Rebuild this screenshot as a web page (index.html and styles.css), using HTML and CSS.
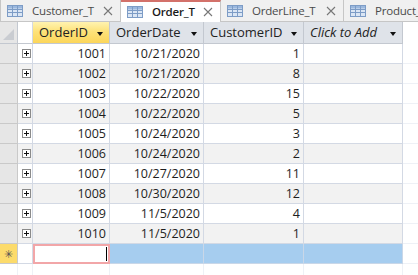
FILE: index.html
```html
<!DOCTYPE html>
<html lang="en">
<head>
    <meta charset="UTF-8">
    <title>Order_T</title>
    <link rel="stylesheet" href="styles.css">
</head>
<body>
    <!-- Document tabs -->
    <div class="tabs">
        <div class="tab tab-customer">
            <svg class="tbl-icon" width="16" height="12" viewBox="0 0 16 12"><rect x="0.5" y="0.5" width="15" height="11" fill="#dbe6f4" stroke="#7d9cc6"/><rect x="1" y="1" width="14" height="2.5" fill="#9bb8de"/><path d="M1 4.5h14M1 7.5h14M5.5 1v10M10.5 1v10" stroke="#7d9cc6" stroke-width="1"/></svg>
            <span class="tab-name">Customer_T</span>
            <svg class="close" width="10" height="10" viewBox="0 0 10 10"><path d="M1 1l8 8M9 1l-8 8" stroke="#777" stroke-width="1.1"/></svg>
        </div>
        <div class="tab tab-order active">
            <svg class="tbl-icon" width="16" height="12" viewBox="0 0 16 12"><rect x="0.5" y="0.5" width="15" height="11" fill="#dbe6f4" stroke="#7d9cc6"/><rect x="1" y="1" width="14" height="2.5" fill="#9bb8de"/><path d="M1 4.5h14M1 7.5h14M5.5 1v10M10.5 1v10" stroke="#7d9cc6" stroke-width="1"/></svg>
            <span class="tab-name">Order_T</span>
            <svg class="close" width="10" height="10" viewBox="0 0 10 10"><path d="M1 1l8 8M9 1l-8 8" stroke="#777" stroke-width="1.1"/></svg>
        </div>
        <div class="tab tab-orderline">
            <svg class="tbl-icon" width="16" height="12" viewBox="0 0 16 12"><rect x="0.5" y="0.5" width="15" height="11" fill="#dbe6f4" stroke="#7d9cc6"/><rect x="1" y="1" width="14" height="2.5" fill="#9bb8de"/><path d="M1 4.5h14M1 7.5h14M5.5 1v10M10.5 1v10" stroke="#7d9cc6" stroke-width="1"/></svg>
            <span class="tab-name">OrderLine_T</span>
            <svg class="close" width="10" height="10" viewBox="0 0 10 10"><path d="M1 1l8 8M9 1l-8 8" stroke="#777" stroke-width="1.1"/></svg>
        </div>
        <div class="tab tab-product">
            <svg class="tbl-icon" width="16" height="12" viewBox="0 0 16 12"><rect x="0.5" y="0.5" width="15" height="11" fill="#dbe6f4" stroke="#7d9cc6"/><rect x="1" y="1" width="14" height="2.5" fill="#9bb8de"/><path d="M1 4.5h14M1 7.5h14M5.5 1v10M10.5 1v10" stroke="#7d9cc6" stroke-width="1"/></svg>
            <span class="tab-name">Product_T</span>
        </div>
    </div>

    <!-- Datasheet -->
    <div class="sheet">
        <div class="row head">
            <div class="cell sel corner"><span class="corner-mark"></span></div>
            <div class="cell exp"></div>
            <div class="cell hcell picked">OrderID<span class="arrow"></span></div>
            <div class="cell hcell">OrderDate<span class="arrow"></span></div>
            <div class="cell hcell">CustomerID<span class="arrow"></span></div>
            <div class="cell hcell add">Click to Add<span class="arrow"></span></div>
            <div class="cell fill"></div>
        </div>
        <div id="rows"></div>
        <div class="row newrow">
            <div class="cell sel star">&#10035;</div>
            <div class="cell exp"></div>
            <div class="cell editing"><span class="caret"></span></div>
            <div class="cell blue"></div>
            <div class="cell blue"></div>
            <div class="cell blue"></div>
            <div class="cell fill"></div>
        </div>
        <div class="row empty">
            <div class="cell"></div>
            <div class="cell"></div>
            <div class="cell"></div>
            <div class="cell"></div>
            <div class="cell"></div>
            <div class="cell"></div>
            <div class="cell fill"></div>
        </div>
    </div>

    <script>
        // Order rows
        var orders = [
            [1001, "10/21/2020", 1],
            [1002, "10/21/2020", 8],
            [1003, "10/22/2020", 15],
            [1004, "10/22/2020", 5],
            [1005, "10/24/2020", 3],
            [1006, "10/24/2020", 2],
            [1007, "10/27/2020", 11],
            [1008, "10/30/2020", 12],
            [1009, "11/5/2020", 4],
            [1010, "11/5/2020", 1]
        ];

        var html = "";
        orders.forEach(function(o, i) {
            html += '<div class="row data' + (i % 2 ? ' alt' : '') + '">' +
                '<div class="cell sel"></div>' +
                '<div class="cell exp"><span class="plus"></span></div>' +
                '<div class="cell num">' + o[0] + '</div>' +
                '<div class="cell num">' + o[1] + '</div>' +
                '<div class="cell num">' + o[2] + '</div>' +
                '<div class="cell"></div>' +
                '<div class="cell fill"></div>' +
                '</div>';
        });
        document.getElementById("rows").innerHTML = html;
    </script>
</body>
</html>
```

FILE: styles.css
```css
body {
    margin: 0;
    font-family: 'Open Sans', 'Noto Sans', sans-serif;
    font-size: 12.5px;
    color: #1e1e1e;
    background: #fff;
    overflow: hidden;
}

/* Tabs */
.tabs {
    display: flex;
    height: 22px;
    background: #f0f0f0;
    overflow: hidden;
}

.tab {
    display: flex;
    align-items: center;
    flex: none;
    box-sizing: border-box;
    height: 22px;
    padding-left: 6px;
    background: #f0f0f0;
    border-right: 1px solid #c6c6c6;
    border-bottom: 1px solid #c6c6c6;
    color: #4a4a4a;
    font-size: 11.5px;
    letter-spacing: -0.2px;
    white-space: nowrap;
    overflow: hidden;
}

.tab-customer { width: 121px; border-left: 1px solid #c6c6c6; }
.tab-order { width: 100px; }
.tab-orderline { width: 123px; }
.tab-product { flex: 1 1 0; min-width: 0; border-right: none; }

.tab.active {
    background: #fff;
    border-top: 2px solid #d3716a;
    border-bottom: none;
    color: #1a1a1a;
    font-weight: 600;
    padding-bottom: 1px;
}

.tbl-icon {
    flex: none;
}

.tab-name {
    margin-left: 9px;
    flex: 1 1 0;
    min-width: 0;
}

.close {
    margin-right: 7px;
    flex: none;
}

/* Datasheet grid */
.row {
    display: grid;
    grid-template-columns: 18px 15px 77px 94px 100px 99px 1fr;
    height: 20px;
}

.cell {
    box-sizing: border-box;
    border-right: 1px solid #d3d9e4;
    border-bottom: 1px solid #d3d9e4;
    line-height: 19px;
    white-space: nowrap;
    overflow: hidden;
}

.row.head {
    height: 22px;
    background: #dfe3e9;
}

.head .cell {
    border-right-color: #c3c8d0;
    border-bottom-color: #c3c8d0;
    line-height: 21px;
    position: relative;
}

.hcell {
    padding-left: 6px;
    font-size: 13px;
    color: #222;
}

.hcell.picked {
    background: linear-gradient(#fff3b0, #fde27a 45%, #fcd65a);
}

.hcell.add {
    font-style: italic;
}

.arrow {
    position: absolute;
    right: 6px;
    top: 10px;
    border-left: 3.5px solid transparent;
    border-right: 3.5px solid transparent;
    border-top: 4px solid #111;
}

.head .exp {
    background: #fff;
    border-right-color: #d3d9e4;
}

.corner-mark {
    position: absolute;
    left: 3px;
    bottom: 3px;
    border-left: 11px solid transparent;
    border-bottom: 11px solid #c9ccd1;
}

.head .fill {
    background: #fff;
    border: none;
}

.sel {
    background: #e6e6e6;
    border-right-color: #c9c9c9;
    border-bottom-color: #c9c9c9;
}

.exp {
    position: relative;
    background: #fff;
}

.plus {
    position: absolute;
    left: 4px;
    top: 5px;
    width: 7px;
    height: 7px;
    border: 1px solid #8a8a8a;
    background:
        linear-gradient(#111, #111) center / 5px 1px no-repeat,
        linear-gradient(#111, #111) center / 1px 5px no-repeat,
        #fff;
}

.num {
    text-align: right;
    padding-right: 3px;
}

.data.alt .cell {
    background: #f2f2f2;
}

.data.alt .sel {
    background: #e6e6e6;
}

.data .fill,
.data.alt .fill,
.newrow .fill {
    background: #fff;
    border-right: none;
    border-bottom-color: #eef1f6;
}

.newrow .star {
    background: #fcdb6b;
    text-align: center;
    font-size: 11px;
    color: #555;
}

.editing {
    position: relative;
    background: #fff;
    border: 1px solid #f2a6a8;
    outline: 1px solid #f2a6a8;
    outline-offset: -2px;
}

.caret {
    position: absolute;
    right: 2px;
    top: 2px;
    width: 1px;
    height: 14px;
    background: #000;
}

.blue {
    background: #a6cdef;
    border-right-color: #c9d7e8;
    border-bottom-color: #c9d7e8;
}

.row.empty .cell {
    border-right-color: #eef1f6;
    border-bottom: none;
}

.row.empty .fill {
    border-right: none;
}
```
